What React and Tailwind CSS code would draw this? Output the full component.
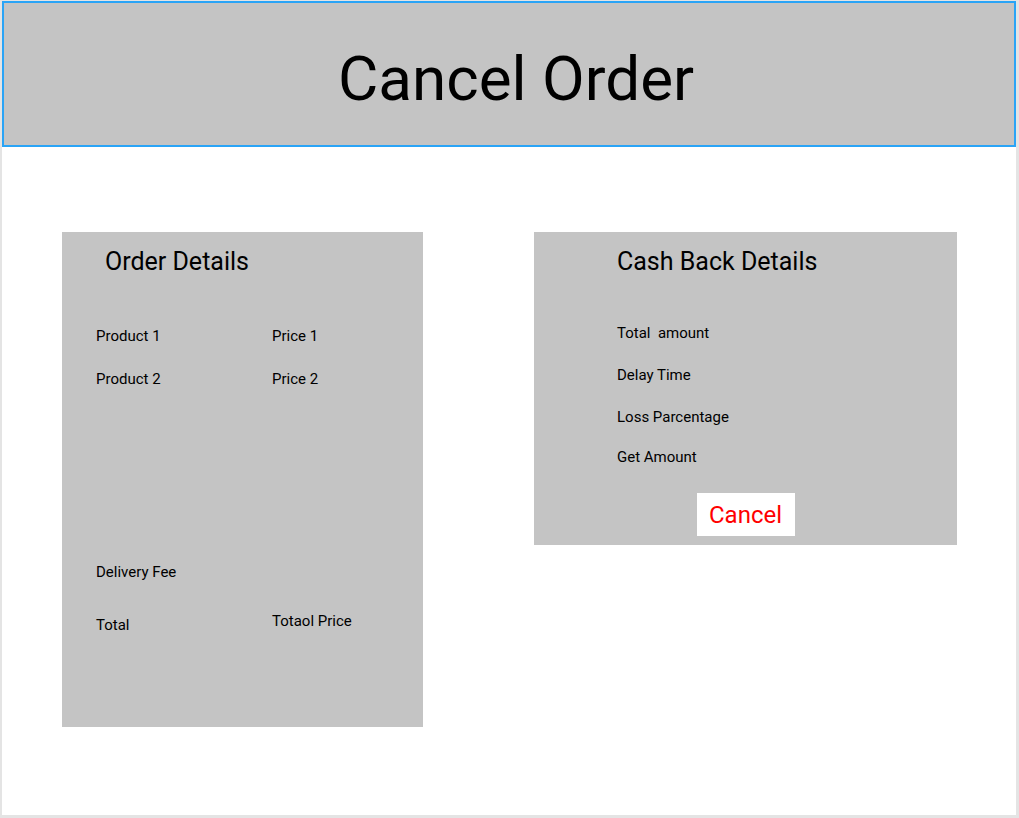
export default function App() {
  const font = { fontFamily: "Roboto, 'Noto Sans', sans-serif" };
  return (
    <div
      className="w-[1019px] h-[818px] bg-white border-l-2 border-r-[3px] border-b-[3px] border-t border-[#e4e4e4] flex flex-col text-black overflow-hidden"
      style={font}
    >
      <div className="h-[146px] shrink-0 border-2 border-[#2aa4f6] bg-[#c4c4c4] flex items-center justify-center pt-[8px] pl-[14px]">
        <h1 className="text-[62px] leading-[73px] font-normal">Cancel Order</h1>
      </div>

      <div className="flex items-start pl-[60px] pt-[85px]">
        {/* Order Details */}
        <div className="w-[361px] h-[495px] bg-[#c4c4c4] flex flex-col pl-[34px] pt-[15px]">
          <h2 className="text-[25px] leading-[29px] pl-[9px]">Order Details</h2>
          <div className="mt-[50px] flex text-[15px] leading-[20px]">
            <span className="w-[176px]">Product 1</span>
            <span>Price 1</span>
          </div>
          <div className="mt-[23px] flex text-[15px] leading-[20px]">
            <span className="w-[176px]">Product 2</span>
            <span>Price 2</span>
          </div>
          <div className="mt-[173px] flex text-[15px] leading-[20px]">
            <span className="w-[176px]">Delivery Fee</span>
          </div>
          <div className="mt-[29px] flex items-start text-[15px] leading-[20px]">
            <span className="w-[176px] mt-[4px]">Total</span>
            <span>Totaol Price</span>
          </div>
        </div>

        {/* Cash Back Details */}
        <div className="ml-[111px] w-[423px] h-[313px] bg-[#c4c4c4] flex flex-col pt-[15px]">
          <h2 className="text-[25px] leading-[29px] pl-[83px]">Cash Back Details</h2>
          <div className="pl-[83px] text-[15px] leading-[20px] flex flex-col">
            <span className="mt-[47px] whitespace-pre">Total  amount</span>
            <span className="mt-[22px]">Delay Time</span>
            <span className="mt-[22px]">Loss Parcentage</span>
            <span className="mt-[20px]">Get Amount</span>
          </div>
          <div className="flex justify-center mt-[26px]">
            <button className="w-[98px] h-[43px] bg-white text-[#ff0000] text-[24px] leading-[28px] flex items-center justify-center">
              Cancel
            </button>
          </div>
        </div>
      </div>
    </div>
  );
}
